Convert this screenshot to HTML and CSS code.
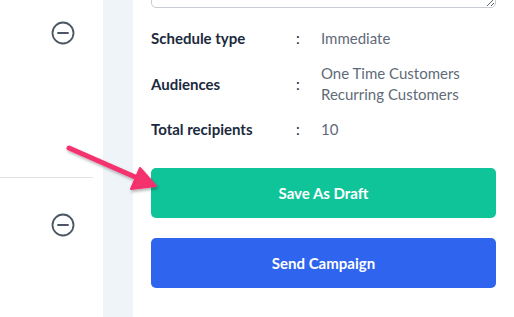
FILE: index.html
```html
<!DOCTYPE html>
<html lang="en">
<head>
    <meta charset="UTF-8">
    <meta name="viewport" content="width=device-width, initial-scale=1.0">
    <title>Campaign summary</title>
    <link rel="stylesheet" href="styles.css">
</head>
<body>
    <div class="page">
        <div class="side">
            <div class="side-item first">
                <svg class="minus" width="24" height="24" viewBox="0 0 24 24"><circle cx="12" cy="12" r="10.5" fill="none" stroke="#4b5563" stroke-width="1.8"/><path d="M7 12h10" stroke="#4b5563" stroke-width="1.8" stroke-linecap="round"/></svg>
            </div>
            <div class="side-item second">
                <svg class="minus" width="24" height="24" viewBox="0 0 24 24"><circle cx="12" cy="12" r="10.5" fill="none" stroke="#4b5563" stroke-width="1.8"/><path d="M7 12h10" stroke="#4b5563" stroke-width="1.8" stroke-linecap="round"/></svg>
            </div>
        </div>
        <div class="strip"></div>
        <div class="main">
            <textarea class="note"></textarea>
            <div class="summary">
                <div class="row">
                    <span class="label">Schedule type</span>
                    <span class="colon">:</span>
                    <span class="value">Immediate</span>
                </div>
                <div class="row">
                    <span class="label">Audiences</span>
                    <span class="colon">:</span>
                    <span class="value">One Time Customers<br>Recurring Customers</span>
                </div>
                <div class="row">
                    <span class="label">Total recipients</span>
                    <span class="colon">:</span>
                    <span class="value">10</span>
                </div>
            </div>
            <button class="btn draft">Save As Draft</button>
            <button class="btn send">Send Campaign</button>
        </div>
    </div>
    <!-- arrow pointing at draft button -->
    <svg class="arrow" width="514" height="317" viewBox="0 0 514 317">
        <defs>
            <filter id="sh" x="-20%" y="-20%" width="140%" height="140%">
                <feDropShadow dx="1" dy="2" stdDeviation="1.5" flood-color="#000" flood-opacity="0.3"/>
            </filter>
        </defs>
        <g filter="url(#sh)" fill="#f4306d" stroke="#f4306d" stroke-linecap="round" stroke-linejoin="round">
            <path d="M69 148 L142 180" stroke-width="5" fill="none"/>
            <path d="M140 168 L156 186 L131 189 Z" stroke-width="2"/>
        </g>
    </svg>
</body>
</html>
```

FILE: styles.css
```css
*{
    margin: 0;
    padding: 0;
    box-sizing: border-box;
}
html,body{
    height: 100%;
    overflow: hidden;
}
body{
    background: #fff;
    font-family: Lato, "Open Sans", sans-serif;
    position: relative;
}
.page{
    display: flex;
    height: 100%;
}
.side{
    width: 103px;
    display: flex;
    flex-direction: column;
}
.side-item{
    display: flex;
    justify-content: flex-end;
    padding-right: 28px;
}
.side-item.first{
    height: 178px;
    padding-top: 21px;
    margin-right: 10px;
    padding-right: 18px;
    border-bottom: 1px solid #dfe3e8;
}
.side-item.second{
    padding-top: 35px;
}
.strip{
    width: 30px;
    background: #eff4f9;
}
.main{
    width: 345px;
    margin-left: 18px;
    display: flex;
    flex-direction: column;
}
.note{
    display: block;
    width: 100%;
    height: 70px;
    margin-top: -62px;
    border: 1px solid #c7ccd3;
    border-radius: 5px;
    resize: vertical;
}
.summary{
    display: flex;
    flex-direction: column;
    gap: 14px;
    margin-top: 20px;
}
.row{
    display: flex;
    align-items: center;
    font-size: 15px;
    line-height: 21px;
}
.label{
    width: 145px;
    font-weight: 700;
    color: #1b2a3e;
}
.colon{
    width: 25px;
    color: #1b2a3e;
}
.value{
    color: #5f6b79;
}
.btn{
    height: 50px;
    border: none;
    border-radius: 5px;
    color: #fff;
    font-family: Lato, "Open Sans", sans-serif;
    font-size: 15px;
    font-weight: 700;
}
.draft{
    margin-top: 28px;
    background: #0fc499;
}
.send{
    margin-top: 20px;
    background: #2f64ee;
}
.arrow{
    position: absolute;
    left: 0;
    top: 0;
    pointer-events: none;
}
```
